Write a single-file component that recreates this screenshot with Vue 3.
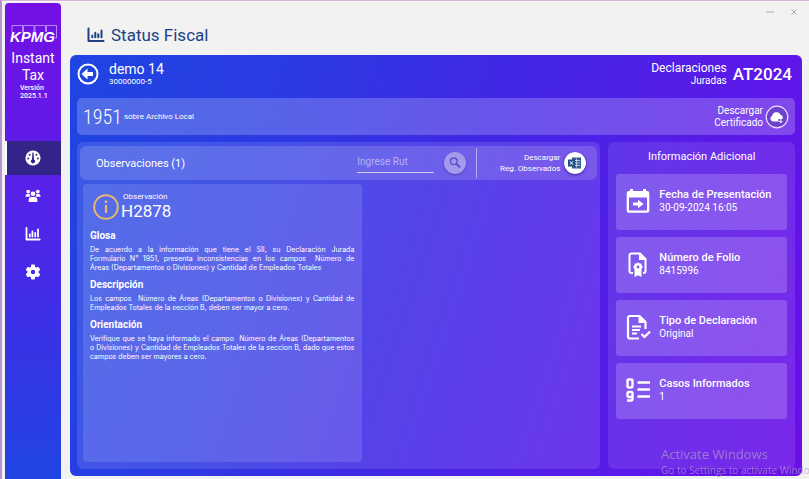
<script setup>
import { ref } from 'vue'

const rut = ref('')
const active = ref('panel')

const nav = [
  { id: 'panel', label: 'Panel' },
  { id: 'users', label: 'Usuarios' },
  { id: 'stats', label: 'Status Fiscal' },
  { id: 'settings', label: 'Ajustes' }
]

const sections = [
  {
    title: 'Glosa',
    text: 'De acuerdo a la información que tiene el SII, su Declaración Jurada Formulario\u00a0N° 1951, presenta inconsistencias en los campos \u00a0Número de Áreas\u00a0(Departamentos o Divisiones) y Cantidad de Empleados Totales'
  },
  {
    title: 'Descripción',
    text: 'Los campos \u00a0Número de Áreas (Departamentos o Divisiones) y Cantidad de Empleados Totales de la sección B, deben ser mayor a cero.'
  },
  {
    title: 'Orientación',
    text: 'Verifique que se haya informado el campo \u00a0Número de Áreas (Departamentos o\u00a0Divisiones) y Cantidad de Empleados Totales de la seccion B, dado que estos campos deben ser mayores a cero.'
  }
]

const info = [
  { icon: 'date', label: 'Fecha de Presentación', value: '30-09-2024 16:05' },
  { icon: 'folio', label: 'Número de Folio', value: '8415996' },
  { icon: 'type', label: 'Tipo de Declaración', value: 'Original' },
  { icon: 'cases', label: 'Casos Informados', value: '1' }
]
</script>

<template>
  <div class="window">
    <aside class="sidebar">
      <div class="brand">
        <svg class="logo" viewBox="0 0 48 20" role="img" aria-label="KPMG">
          <g fill="none" stroke="#c9a6ff" stroke-width="0.8">
            <path d="M3 8V1.500H13.500V8M14.500 8V1.500H25V8M26 8V1.500H36.500V8M37.500 8V1.500H47.500V14H46" />
          </g>
          <text x="1" y="18" class="logo-text">KPMG</text>
        </svg>
        <div class="product">Instant<br />Tax</div>
        <div class="version">Versión<br />2025.1.1</div>
      </div>
      <nav class="nav">
        <button
          v-for="item in nav"
          :key="item.id"
          type="button"
          class="nav-item"
          :class="{ active: active === item.id }"
          :aria-label="item.label"
          @click="active = item.id"
        >
          <svg v-if="item.id === 'panel'" class="nav-icon" viewBox="0 0 16 16">
            <circle cx="8" cy="8" r="7.600" fill="#fff" />
            <g fill="#33248a">
              <circle cx="3.200" cy="8.400" r="1" /><circle cx="4.600" cy="4.800" r="1" />
              <circle cx="11.400" cy="4.800" r="1" /><circle cx="12.800" cy="8.400" r="1" />
              <path d="M7.400 2.500H8.600L9 9.600A2 2 0 1 1 7 9.600Z" />
            </g>
          </svg>
          <svg v-else-if="item.id === 'users'" class="nav-icon" viewBox="0 0 16 16" fill="#fff">
            <circle cx="3.200" cy="3.600" r="1.900" /><circle cx="12.800" cy="3.600" r="1.900" /><circle cx="8" cy="5.800" r="2.400" />
            <path d="M.5 8.800V8A2 2 0 0 1 2.500 6H4.700Q4.600 8 5.600 8.800ZM15.500 8.800V8A2 2 0 0 0 13.500 6H11.300Q11.400 8 10.400 8.800ZM3.700 14V11.800A2.800 2.800 0 0 1 6.500 9H9.500A2.800 2.800 0 0 1 12.300 11.800V14Z" />
          </svg>
          <svg v-else-if="item.id === 'stats'" class="nav-icon" viewBox="0 0 16 16" fill="none" stroke="#fff" stroke-width="1.800" stroke-linecap="round" stroke-linejoin="round">
            <path d="M1.500 2V13.500H14.700M4.800 10.500V8.500M7.400 10.500V5.500M10.200 10.500V7M13 10.500V3.500" />
          </svg>
          <svg v-else class="nav-icon" viewBox="0 0 16 16">
            <g fill="#fff">
              <circle cx="8" cy="8" r="5.600" />
              <rect v-for="a in [0, 60, 120]" :key="a" x="6" y="0.600" width="4" height="14.800" rx="1" :transform="`rotate(${a} 8 8)`" />
            </g>
            <circle cx="8" cy="8" r="2.200" fill="#452de8" />
          </svg>
        </button>
      </nav>
    </aside>

    <main class="content">
      <header class="titlebar">
        <h1 class="page-title">
          <svg class="title-icon" viewBox="0 0 18 16" fill="none" stroke="#213f87" stroke-width="2" stroke-linecap="round" stroke-linejoin="round">
            <path d="M1.500 1.500V14H16.500M5.300 10.300V8.500M8.300 10.300V5.800M11.300 10.300V7.200M14.500 10.300V3.500" />
          </svg>
          Status Fiscal
        </h1>
        <div class="window-buttons">
          <button type="button" aria-label="Minimizar"><svg viewBox="0 0 8 8"><path d="M0 4H8" /></svg></button>
          <button type="button" aria-label="Cerrar"><svg viewBox="0 0 8 8"><path d="M1.500 1.500L6.500 6.500M6.500 1.500L1.500 6.500" /></svg></button>
        </div>
      </header>

      <section class="board">
        <div class="client">
          <button type="button" class="round-btn" aria-label="Volver">
            <svg viewBox="0 0 22 22">
              <circle cx="11" cy="11" r="9.500" fill="none" stroke="#fff" stroke-width="2" />
              <path d="M4.500 11L10.500 5.500V9H16V13H10.500V16.500Z" fill="#fff" />
            </svg>
          </button>
          <div class="client-id">
            <div class="client-name">demo 14</div>
            <div class="client-rut">30000000-5</div>
          </div>
          <div class="declarations">
            <div class="decl-top">Declaraciones</div>
            <div class="decl-sub">Juradas</div>
          </div>
          <div class="year">AT2024</div>
        </div>

        <div class="form-bar">
          <span class="form-number">1951</span>
          <span class="form-name">sobre Archivo Local</span>
          <button type="button" class="download">
            <span>Descargar<br />Certificado</span>
            <svg class="cert-icon" viewBox="0 0 24 24">
              <circle cx="12" cy="12" r="10.800" fill="#6a42cc" stroke="#e8dcff" stroke-width="1.200" />
              <path d="M8 16.500A3 3 0 0 1 7.200 10.800 4.500 4.500 0 0 1 15.600 9.800 3.300 3.300 0 0 1 17.500 14L13.500 14V16.500Z" fill="#fff" />
              <path d="M15.800 13.500V17.500M14 16L15.800 17.800 17.600 16" fill="none" stroke="#fff" stroke-width="1" />
            </svg>
          </button>
        </div>

        <div class="columns">
          <section class="observations">
            <div class="toolbar">
              <h2 class="toolbar-title">Observaciones (1)</h2>
              <input v-model="rut" class="rut" type="text" placeholder="Ingrese Rut" aria-label="Ingrese Rut" />
              <button type="button" class="search" aria-label="Buscar">
                <svg viewBox="0 0 22 22">
                  <circle cx="9.800" cy="9.300" r="3.300" fill="none" stroke="#6252c8" stroke-width="1.500" />
                  <path d="M12.300 11.800L16 15.500" stroke="#6252c8" stroke-width="2" />
                </svg>
              </button>
              <button type="button" class="observed">
                <span>Descargar<br />Reg. Observados</span>
                <svg class="sheet-icon" viewBox="0 0 22 22">
                  <circle cx="11" cy="11" r="11" fill="#fff" />
                  <path d="M8 5.500H17V16.500H8Z" fill="#315d91" />
                  <path d="M12.500 6.500V15.500M9 8.500H16M9 11H16M9 13.500H16" stroke="#c9ddec" stroke-width=".8" />
                  <rect x="4" y="7.500" width="7" height="7" rx=".6" fill="#204c85" />
                  <path d="M6 9.300L9 12.700M9 9.300L6 12.700" stroke="#fff" stroke-width="1" />
                </svg>
              </button>
            </div>

            <article class="card">
              <header class="card-head">
                <svg class="info-icon" viewBox="0 0 26 26">
                  <circle cx="13" cy="13" r="11.800" fill="none" stroke="#e9b66c" stroke-width="2" />
                  <circle cx="13" cy="7.800" r="1.400" fill="#e9b66c" />
                  <path d="M13 11V19" stroke="#e9b66c" stroke-width="2.200" />
                </svg>
                <div>
                  <div class="card-kind">Observación</div>
                  <div class="card-code">H2878</div>
                </div>
              </header>
              <template v-for="s in sections" :key="s.title">
                <h3>{{ s.title }}</h3>
                <p>{{ s.text }}</p>
              </template>
            </article>
          </section>

          <aside class="extra">
            <h2 class="extra-title">Información Adicional</h2>
            <div v-for="row in info" :key="row.icon" class="info-card">
              <svg v-if="row.icon === 'date'" viewBox="0 0 26 26">
                <path fill="#fff" fill-rule="evenodd" d="M4 3H5V1H8V3H18V1H21V3H22A2.300 2.300 0 0 1 24.300 5.300V22.500A2.300 2.300 0 0 1 22 24.800H4A2.300 2.300 0 0 1 1.700 22.500V5.300A2.300 2.300 0 0 1 4 3ZM4 9.500V22.500H22V9.500ZM8 14.500H13V11.800L18.500 16 13 20.200V17.500H8Z" />
              </svg>
              <svg v-else-if="row.icon === 'folio'" viewBox="0 0 26 26">
                <path d="M8 22H6.500A2 2 0 0 1 4.500 20V4.500A2 2 0 0 1 6.500 2.500H15L20.500 8V20A2 2 0 0 1 18.500 22H18" fill="none" stroke="#fff" stroke-width="2" />
                <path d="M14 2.500V9H20.500Z" fill="#fff" />
                <path d="M13 11.300L14.500 12.600 16.500 12.500 16.700 14.500 18 16 16.700 17.500 16.500 19.300V26L13 24.300 9.500 26V19.300L9.300 17.500 8 16 9.300 14.500 9.500 12.500 11.500 12.600Z" fill="#fff" />
                <circle cx="13" cy="16" r="1.400" fill="#8e50ec" />
              </svg>
              <svg v-else-if="row.icon === 'type'" viewBox="0 0 26 26">
                <path d="M14 24.500H5A2 2 0 0 1 3 22.500V4A2 2 0 0 1 5 2H14.500L20.500 8V15" fill="none" stroke="#fff" stroke-width="2.200" />
                <path d="M13.500 2V9H20.500Z" fill="#fff" />
                <path d="M7 12.500H16M7 16H15M7 19.500H12" stroke="#fff" stroke-width="1.800" />
                <path d="M16.500 20L19.500 23 25 17.500" fill="none" stroke="#fff" stroke-width="2.200" />
              </svg>
              <svg v-else viewBox="0 0 26 26" fill="none" stroke="#fff" stroke-width="2.400">
                <rect x="2.500" y="2.500" width="5" height="8" rx="1.500" />
                <path d="M7.500 20H4Q2.500 20 2.500 18.500V16.500Q2.500 15 4 15H6Q7.500 15 7.500 16.500V22Q7.500 23.500 6 23.500H2M12.500 5.500H25M12.500 12.500H25M12.500 19.500H25" />
              </svg>
              <div>
                <div class="info-label">{{ row.label }}</div>
                <div class="info-value">{{ row.value }}</div>
              </div>
            </div>
          </aside>
        </div>
      </section>
    </main>

    <div class="watermark">
      <div class="wm-title">Activate Windows</div>
      <div class="wm-text">Go to Settings to activate Windows.</div>
    </div>
  </div>
</template>

<style>
body {
  margin: 0;
  background: #f2f2f1;
}
</style>

<style scoped>
* {
  box-sizing: border-box;
}
.window {
  position: relative;
  display: flex;
  gap: 9px;
  min-height: 100vh;
  padding: 2px 7px 0 3px;
  border-top: 1px solid #dcb4da;
  border-left: 2px solid #b795d2;
  background: #f2f2f1;
  color: #fff;
  font-family: Roboto, "Liberation Sans", sans-serif;
  overflow: hidden;
}
button {
  padding: 0;
  border: 0;
  background: none;
  color: inherit;
  font: inherit;
  cursor: pointer;
}
svg {
  display: block;
  flex: none;
}
h1, h2, h3, p {
  margin: 0;
  font-weight: 400;
}
.sidebar {
  flex: none;
  width: 56px;
  border-radius: 4px 4px 0 0;
  background: linear-gradient(180deg, #7410e6 0%, #6219e8 25%, #4b28e8 52%, #3038e5 80%, #2045e3 100%);
}
.brand {
  height: 138px;
  padding-top: 21px;
}
.logo {
  width: 48px;
  height: 20px;
  margin: 0 auto;
}
.logo-text {
  fill: #fff;
  font: italic 700 15px "Liberation Sans", Arial, sans-serif;
}
.product {
  margin-top: 6px;
  font-size: 14px;
  line-height: 17px;
  text-align: center;
}
.version {
  width: 28px;
  margin: 0 auto;
  padding-left: 1px;
  font-size: 7px;
  line-height: 8px;
  font-weight: 500;
}
.nav {
  display: grid;
  gap: 4px;
}
.nav-item {
  display: grid;
  place-items: center;
  height: 34px;
}
.nav-item.active {
  background: #33248a;
  box-shadow: inset 2px 0 #fff;
}
.nav-icon {
  width: 16px;
  height: 16px;
}
.content {
  flex: 1;
  min-width: 0;
  display: flex;
  flex-direction: column;
  padding-bottom: 3px;
}
.titlebar {
  display: flex;
  justify-content: space-between;
  height: 52px;
  padding: 0 4px 0 17px;
}
.page-title {
  display: flex;
  align-items: center;
  gap: 6px;
  padding-top: 11px;
  color: #213f87;
  font-size: 17px;
}
.title-icon {
  width: 18px;
  height: 16px;
}
.window-buttons {
  display: flex;
  gap: 16px;
  padding-top: 5px;
  height: 13px;
}
.window-buttons svg {
  width: 8px;
  height: 8px;
  fill: none;
  stroke: #aaa;
}
.board {
  flex: 1;
  display: flex;
  flex-direction: column;
  padding: 0 7px 7px;
  border-radius: 6px;
  background: linear-gradient(108deg, #1f45e2 0%, #2a3be3 25%, #4028e5 50%, #571be8 75%, #6c0fe8 100%);
}
.client {
  display: flex;
  align-items: center;
  height: 43px;
  padding-right: 3px;
}
.round-btn svg {
  width: 22px;
  height: 22px;
}
.round-btn {
  margin-top: -6px;
}
.client-id {
  flex: 1;
  padding-left: 10px;
  margin-top: -6px;
}
.client-name {
  font-size: 14px;
  line-height: 16px;
}
.client-rut {
  font-size: 8px;
  line-height: 10px;
}
.declarations {
  margin-top: -6px;
  text-align: right;
}
.decl-top {
  font-size: 12px;
  line-height: 14px;
}
.decl-sub {
  font-size: 10px;
  line-height: 12px;
}
.year {
  margin-top: -6px;
  padding-left: 6px;
  font-size: 17px;
  font-weight: 500;
}
.form-bar {
  display: flex;
  align-items: center;
  height: 37px;
  padding: 0 6px 0 6px;
  border-radius: 5px;
  background: rgba(255, 255, 255, 0.21);
}
.form-number {
  font-family: "Roboto Condensed", "Liberation Sans Narrow", Roboto, sans-serif;
  font-size: 20px;
  font-weight: 300;
}
.form-name {
  flex: 1;
  padding-left: 2px;
  font-size: 8px;
}
.download {
  display: flex;
  align-items: center;
  gap: 2px;
  font-size: 10px;
  line-height: 12px;
  text-align: right;
}
.cert-icon {
  width: 24px;
  height: 24px;
}
.columns {
  flex: 1;
  display: flex;
  gap: 8px;
  margin-top: 7px;
}
.observations {
  flex: 1;
  min-width: 0;
  display: flex;
  flex-direction: column;
  padding: 4px 3px 7px;
  border-radius: 6px;
  background: rgba(255, 255, 255, 0.12);
}
.toolbar {
  display: flex;
  align-items: center;
  height: 34px;
  padding: 0 11px 0 16px;
  border-radius: 6px;
  background: rgba(255, 255, 255, 0.15);
}
.toolbar-title {
  flex: 1;
  font-size: 11px;
}
.rut {
  width: 77px;
  height: 18px;
  margin-top: 2px;
  padding: 0 0 4px;
  border: 0;
  border-bottom: 1px solid #d4cdf8;
  border-radius: 0;
  outline: 0;
  background: transparent;
  color: #fff;
  font: 10px Roboto, sans-serif;
}
.rut::placeholder {
  color: #b9b1f5;
  opacity: 1;
}
.search {
  margin: 0 10px;
  border-radius: 50%;
  background: #a599ee;
  box-shadow: 0 1px 2px rgba(30, 10, 120, 0.4);
}
.search svg,
.sheet-icon {
  width: 22px;
  height: 22px;
}
.observed {
  display: flex;
  align-items: center;
  justify-content: flex-end;
  gap: 4px;
  width: 110px;
  height: 30px;
  border-left: 1px solid #b9a9f5;
  font-size: 8px;
  line-height: 11px;
  text-align: right;
}
.sheet-icon {
  border-radius: 50%;
  box-shadow: 0 1px 3px rgba(30, 10, 100, 0.6);
}
.card {
  flex: 1;
  width: 54%;
  margin: 4px 0 0 3px;
  padding: 8px 8px 8px 7px;
  border-radius: 4px;
  background: rgba(255, 255, 255, 0.12);
}
.card-head {
  display: flex;
  align-items: center;
  gap: 2px;
  padding-left: 3px;
  margin-bottom: 8px;
}
.info-icon {
  width: 26px;
  height: 26px;
}
.card-kind {
  padding-left: 2px;
  font-size: 8px;
  line-height: 9px;
}
.card-code {
  font-size: 17px;
  line-height: 20px;
}
.card h3 {
  font-size: 10px;
  line-height: 14px;
  font-weight: 700;
}
.card p {
  margin: 2px 0 6px;
  font-family: Inter, Roboto, sans-serif;
  font-size: 7px;
  line-height: 9px;
  text-align: justify;
}
.extra {
  flex: none;
  width: 26%;
  display: flex;
  flex-direction: column;
  gap: 7px;
  padding: 0 8px 8px;
  border-radius: 6px;
  background: rgba(255, 255, 255, 0.1);
}
.extra-title {
  height: 25px;
  padding-top: 8px;
  font-size: 11px;
  line-height: 14px;
  text-align: center;
}
.info-card {
  display: flex;
  align-items: center;
  gap: 8px;
  height: 56px;
  padding: 0 0 2px 9px;
  border-radius: 3px;
  background: rgba(255, 255, 255, 0.19);
}
.info-card svg {
  width: 26px;
  height: 26px;
}
.info-label {
  font-size: 11px;
  line-height: 12px;
  font-weight: 500;
}
.info-value {
  font-size: 10px;
  line-height: 13px;
}
.watermark {
  position: absolute;
  left: 659px;
  bottom: 2px;
  color: rgba(178, 160, 190, 0.7);
  font-family: "Open Sans", "Noto Sans", sans-serif;
  white-space: nowrap;
  pointer-events: none;
}
.wm-title {
  font-size: 13px;
  line-height: 18px;
}
.wm-text {
  font-size: 10px;
  line-height: 14px;
}
</style>
